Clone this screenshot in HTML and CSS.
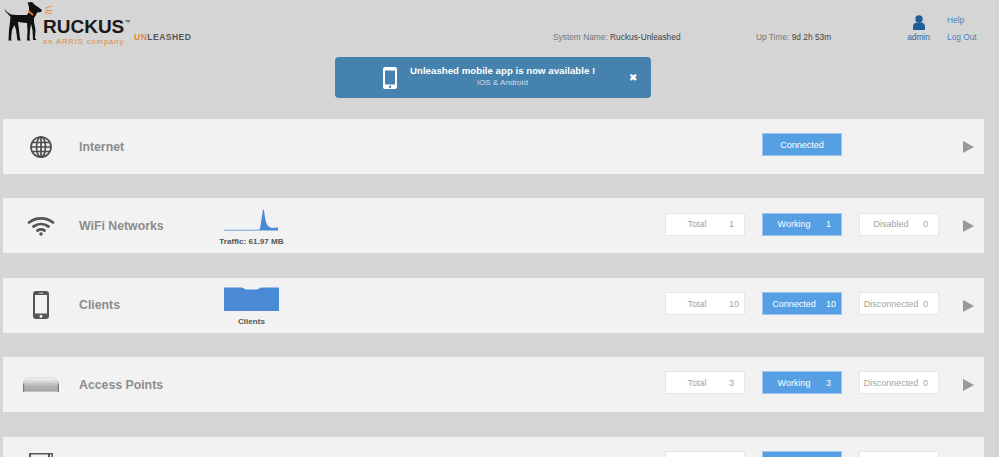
FILE: index.html
```html
<!DOCTYPE html>
<html lang="en">
<head>
<meta charset="utf-8">
<title>Ruckus Unleashed</title>
<link rel="stylesheet" href="styles.css">
</head>
<body>
<header class="header">
  <div class="brand">
    <svg class="dog" viewBox="0 0 52 42" width="52" height="42" aria-hidden="true">
      <path fill="#111" d="M4.500 9L7 12l4 2.500 5 .5h11l2-3v-5l-1.500-4.500L32 2l3 3 3 2 4 3-1 2-4 .5-1 2.500-2 3v4l1.500 8-.5 8 1.500 2H33l-.5-10-1.500-6-1 6-.5 9 1 1.500H27l.5-10.500-.5-7-5-.5-4-.5 1 8 1 9 1 1.500h-3.500L16 30l-1.500-5-2.500 5-1 9 1 1.500H8.500L9 30l1-8 .5-5L8 14l-2.500-2.500z"/>
      <path fill="none" stroke="#e87722" stroke-width="1.800" d="M28.500 11l4.500 4"/>
      <path fill="none" stroke="#e8893a" stroke-width="1" d="M45 8.500l6.500-2.500M45.500 10.500H52M45 12.500l6.500 1"/>
    </svg>
    <div class="wordmark">
      <div class="ruckus">RUCKUS<span class="tm">™</span></div>
      <div class="arris">an ARRIS company</div>
    </div>
    <div class="unleashed"><span class="un">UN</span>LEASHED</div>
  </div>
  <div class="sys"><span class="lbl">System Name:</span> <span class="val">Ruckus-Unleashed</span></div>
  <div class="up"><span class="lbl">Up Time:</span> <span class="val">9d 2h 53m</span></div>
  <div class="user">
    <svg class="user-icon" viewBox="0 0 12 15" width="12" height="15" aria-hidden="true">
      <circle cx="6" cy="4" r="3.700" fill="#1f5f99"/>
      <path fill="#1f5f99" d="M0 15v-3.500C0 9 2 7.500 4 7.500h4c2 0 4 1.500 4 4V15z"/>
    </svg>
    <span>admin</span>
  </div>
  <div class="links"><a>Help</a><a>Log Out</a></div>
</header>

<div class="banner">
  <svg class="banner-phone" viewBox="0 0 14 22" width="14" height="22" aria-hidden="true">
    <path fill="#fff" fill-rule="evenodd" d="M2 0h10a2 2 0 0 1 2 2v18a2 2 0 0 1-2 2H2a2 2 0 0 1-2-2V2a2 2 0 0 1 2-2zM2 3.500v14h10v-14zM7 18.500a1.200 1.200 0 1 0 0 2.400 1.200 1.200 0 0 0 0-2.400z"/>
  </svg>
  <div class="banner-text">
    <div class="banner-title">Unleashed mobile app is now available !</div>
    <div class="banner-sub">iOS &amp; Android</div>
  </div>
  <span class="banner-close">✖</span>
</div>

<main class="rows">
  <section class="row">
    <div class="icon">
      <svg viewBox="0 0 22 22" width="22" height="22" aria-hidden="true"><g fill="none" stroke="#4d4d4d" stroke-width="1.700"><circle cx="11" cy="11" r="10"/><ellipse cx="11" cy="11" rx="4.500" ry="10"/><path d="M11 1v20M1 11h20M2.300 6.500h17.400M2.300 15.500h17.400"/></g></svg>
    </div>
    <h2 class="title">Internet</h2>
    <div class="chart"></div>
    <div class="stats">
      <div class="stat on wide stat-mid">Connected</div>
    </div>
    <div class="arrow"></div>
  </section>

  <section class="row">
    <div class="icon">
      <svg viewBox="0 0 28 20" width="28" height="20" aria-hidden="true"><g fill="none" stroke="#555" stroke-width="2.800" stroke-linecap="round"><path d="M2 6.500c7-5.500 17-5.500 24 0"/><path d="M6.500 10.500c4.500-3.300 10.500-3.300 15 0"/><path d="M10.500 14.500c2-1.300 5-1.300 7 0"/></g><circle cx="14" cy="18" r="1.800" fill="#555"/></svg>
    </div>
    <h2 class="title">WiFi Networks</h2>
    <div class="chart">
      <svg class="plot" viewBox="0 0 55 24" width="55" height="24" aria-hidden="true"><path fill="#4a8ad4" d="M0 23h34c1.500 0 2-1 2.500-4 .7-4 1.500-11 2.500-16.500h.8c1 5.500 1.500 11.500 3 14.500 1 2 2.500 3.500 4.500 3.700 2 .3 5 .3 6.700-.7v3.500H0z"/><path stroke="#8db6e6" stroke-width=".6" d="M0 22.800h34"/></svg>
      <div class="chart-label">Traffic: 61.97 MB</div>
    </div>
    <div class="stats">
      <div class="stat"><span>Total</span><b>1</b></div>
      <div class="stat on"><span>Working</span><b>1</b></div>
      <div class="stat"><span>Disabled</span><b>0</b></div>
    </div>
    <div class="arrow"></div>
  </section>

  <section class="row">
    <div class="icon">
      <svg viewBox="0 0 16 28" width="16" height="28" aria-hidden="true"><path fill="#555" fill-rule="evenodd" d="M3 0h10a3 3 0 0 1 3 3v22a3 3 0 0 1-3 3H3a3 3 0 0 1-3-3V3a3 3 0 0 1 3-3zM2 4v18.500h12V4zM6 1.800v.8h4v-.8zM8 23.700a1.500 1.500 0 1 0 0 3 1.500 1.500 0 0 0 0-3z"/></svg>
    </div>
    <h2 class="title">Clients</h2>
    <div class="chart">
      <svg class="plot" viewBox="0 0 55 24" width="55" height="24" aria-hidden="true"><path fill="#4a8ad4" d="M0 .5h18l4 2h11l4-2h18V24H0z"/></svg>
      <div class="chart-label">Clients</div>
    </div>
    <div class="stats">
      <div class="stat"><span>Total</span><b>10</b></div>
      <div class="stat on"><span>Connected</span><b>10</b></div>
      <div class="stat"><span>Disconnected</span><b>0</b></div>
    </div>
    <div class="arrow"></div>
  </section>

  <section class="row">
    <div class="icon">
      <svg viewBox="0 0 36 15" width="36" height="15" aria-hidden="true"><defs><linearGradient id="ap" x1="0" y1="0" x2="0" y2="1"><stop offset="0" stop-color="#f6f6f6"/><stop offset=".3" stop-color="#d8d8d8"/><stop offset=".55" stop-color="#b8b8b8"/><stop offset="1" stop-color="#a4a4a4"/></linearGradient></defs><path fill="url(#ap)" stroke="#cfcfcf" stroke-width=".6" d="M.3 14.700V6.500c0-2 .6-3.200 2.200-4L6 .5h24l3.500 2c1.600.8 2.200 2 2.200 4v8.200z"/><path fill="#7a7a7a" d="M0 6.500h1.200V15H0zM34.800 6.500H36V15h-1.200z"/></svg>
    </div>
    <h2 class="title">Access Points</h2>
    <div class="chart"></div>
    <div class="stats">
      <div class="stat"><span>Total</span><b>3</b></div>
      <div class="stat on"><span>Working</span><b>3</b></div>
      <div class="stat"><span>Disconnected</span><b>0</b></div>
    </div>
    <div class="arrow"></div>
  </section>

  <section class="row">
    <div class="icon">
      <svg viewBox="0 0 24 22" width="24" height="22" aria-hidden="true"><path fill="#555" fill-rule="evenodd" d="M0 0h24v22H0zM2 1.500v2.500h17V1.500zM21 1.500v2.500h1.500V1.500z"/></svg>
    </div>
    <h2 class="title"></h2>
    <div class="chart"></div>
    <div class="stats">
      <div class="stat"></div>
      <div class="stat on"></div>
      <div class="stat"></div>
    </div>
    <div class="arrow"></div>
  </section>
</main>
</body>
</html>
```

FILE: styles.css
```css
* { box-sizing: border-box; }
html, body { height: 100%; }
body {
  margin: 0;
  background: #d5d5d5;
  font-family: "Liberation Sans", Arial, sans-serif;
  overflow: hidden;
  color: #555;
  display: flex;
  flex-direction: column;
}
.header {
  display: flex;
  height: 57px;
  flex: none;
}
.brand {
  width: 553px;
  display: flex;
  align-items: flex-start;
}
.dog { flex: none; }
.wordmark { margin: 13px 0 0 -9px; width: 91px; flex: none; }
.ruckus {
  font-size: 19px;
  font-weight: 700;
  line-height: 19px;
  color: #1a1a1a;
  white-space: nowrap;
}
.tm { font-size: 6px; vertical-align: 9px; font-weight: 400; }
.arris {
  font-size: 7.500px;
  line-height: 9px;
  color: #e08a3a;
  letter-spacing: .98px;
  margin-top: 1px;
  white-space: nowrap;
}
.unleashed {
  margin: 32px 0 0 0;
  font-size: 8.500px;
  line-height: 10px;
  letter-spacing: .5px;
  font-weight: 700;
  color: #555;
}
.un { color: #e08a3a; }
.sys, .up, .user, .links { font-size: 8.350px; line-height: 11px; }
.sys { width: 203px; padding-top: 32px; white-space: nowrap; }
.up { width: 151px; padding-top: 32px; white-space: nowrap; }
.lbl { color: #777; }
.val { color: #444; }
.user {
  width: 23px;
  display: flex;
  flex-direction: column;
  align-items: center;
  padding-top: 15px;
  color: #2c6ba3;
  gap: 2px;
}
.user-icon { display: block; }
.links {
  display: flex;
  flex-direction: column;
  gap: 6px;
  padding-top: 15px;
  margin-left: 17px;
  white-space: nowrap;
}
.links a { color: #4b86c0; }

.banner {
  width: 316px;
  height: 41px;
  margin-left: 335px;
  flex: none;
  background: #4682ae;
  border-radius: 4px;
  display: flex;
  align-items: center;
  color: #fff;
}
.banner-phone { margin-left: 48px; flex: none; }
.banner-text { width: 185px; margin-left: 13px; text-align: center; }
.banner-title { font-size: 9.700px; font-weight: 700; line-height: 12px; white-space: nowrap; }
.banner-sub { font-size: 8.100px; line-height: 12px; color: #cfdfeb; margin-bottom: 1px; }
.banner-close { font-size: 10px; margin-left: 34px; }

.rows {
  flex: 1;
  min-height: 0;
  overflow: hidden;
  margin: 21px 15.500px 0 3px;
  display: flex;
  flex-direction: column;
  gap: 24.400px;
}
.row {
  height: 55px;
  background: #f2f2f2;
  display: flex;
  align-items: center;
  flex: none;
}
.icon {
  width: 76px;
  display: flex;
  justify-content: center;
  flex: none;
}
.title {
  margin: 0;
  width: 140px;
  flex: none;
  font-size: 12.300px;
  font-weight: 700;
  color: #8c8c8c;
}
.chart {
  width: 65px;
  flex: none;
  display: flex;
  flex-direction: column;
  align-items: center;
  align-self: flex-start;
  padding-top: 9px;
}
.plot { display: block; }
.chart-label {
  font-size: 8.100px;
  font-weight: 700;
  color: #555;
  line-height: 10px;
  margin-top: 6px;
  white-space: nowrap;
}
.stats {
  margin-left: auto;
  align-self: flex-start;
  margin-top: 14.300px;
  display: grid;
  grid-template-columns: repeat(3, 80px);
  column-gap: 17px;
}
.stat {
  height: 23px;
  background: #fff;
  border: 1px solid #e6e6e6;
  display: flex;
  align-items: center;
  font-size: 9px;
  color: #a3a3a3;
  white-space: nowrap;
}
.stat span { width: 62px; margin-right: 1px; text-align: center; flex: none; }
.stat b { font-weight: 400; }
.stat.on { background: #569fe3; border-color: #9cc6ee; color: #fff; }
.stat.wide { justify-content: center; }
.stat-mid { grid-column: 2; }
.arrow {
  width: 0;
  height: 0;
  margin: 1px 9.500px 0 24px;
  border-left: 11px solid #999;
  border-top: 6px solid transparent;
  border-bottom: 6px solid transparent;
  flex: none;
}
```
